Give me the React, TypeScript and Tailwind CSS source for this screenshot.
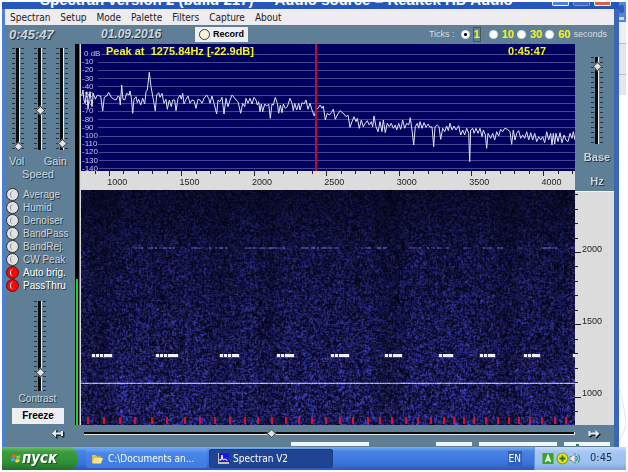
import React, { useEffect, useRef } from "react";

const SANS = "font-['Liberation_Sans',sans-serif]";
const TAHOMA = "font-['DejaVu_Sans_Condensed','DejaVu_Sans',sans-serif]";
const EMBOSS = "text-[#cdd5dc] [text-shadow:1px_1px_0_#26343f]";

/* ---------- spectrum trace ---------- */

const TRACE_PARTS = [
  {
    ox: -1,
    oy: -4,
    points:
      "5,168 9,150 12,180 15,190 20,155 24,205 30,155 36,200 40,160 46,178 52,165 58,168 62,168 68,213 73,172 80,168 86,157 94,172 100,176 108,180 114,168 118,170 121,195 125,135 129,178 134,180 140,160 147,165 150,153 154,172 158,220 162,178 168,170 172,188 176,178 182,195 188,175 194,192 198,155 202,150 208,97 213,140 220,178 226,213 230,165 236,158 240,172 246,160 252,190 258,178 262,208 268,180 274,200 278,180 284,180 288,212 294,175 300,165 304,178 308,160 312,192 318,178 324,168 330,190 336,180 342,182 348,205 354,178 360,180 366,190 372,175 380,165 386,175 390,190 396,168 402,190 410,222 414,180 420,185 426,172 432,222 438,175 444,200 450,180 456,165 462,172 468,180 474,185 482,220 488,190 494,200",
  },
  {
    ox: 159,
    oy: 36,
    points:
      "18,55 24,70 30,55 36,72 42,52 48,60 52,75 56,65 60,95 64,72 68,95 74,72 80,78 86,72 91,115 96,72 100,75 106,52 112,70 116,100 121,75 126,98 130,72 136,85 142,80 150,55 156,70 160,92 164,70 170,90 176,70 180,90 186,68 192,72 198,60 204,88 210,70 216,90 223,108 228,88 234,85 240,75 246,85 250,78 256,120 262,100 268,105 274,98 280,88 286,118 292,105 300,92 306,97 312,102 318,110 324,105 330,142 336,125 342,110 348,125 352,115 358,145 364,120 370,140 376,130 382,122 388,135 394,125 398,140 402,108 408,140 414,155 420,125 426,155 430,120 436,158 442,130 448,140 454,130 460,145 466,135 470,150 476,130",
  },
  {
    ox: 319,
    oy: 46,
    points:
      "2,118 8,90 14,115 20,100 26,105 31,83 36,120 41,165 46,110 52,100 56,115 60,95 66,115 72,98 78,112 84,102 90,112 96,110 101,170 105,110 112,105 117,110 122,148 128,115 134,125 140,108 145,122 150,100 156,120 162,108 168,120 176,107 182,135 188,120 194,135 200,115 206,130 209,215 212,120 218,115 222,130 228,115 234,130 240,115 246,140 250,120 256,135 260,175 264,130 272,145 278,130 284,150 290,125 296,138 302,118 308,125 314,115 322,118 330,125 335,163 340,120 345,150 350,130 356,122 362,145 368,135 374,145 380,125 386,150 392,128 398,150 404,130 410,155 416,140 422,150 428,140 434,158 440,125 446,150 452,130 456,165 460,130 464,162 468,130 474,155 480,128 486,158 492,135 498,150 504,155 510,130 516,145 520,125 525,150",
  },
];

const TRACE = TRACE_PARTS.flatMap(({ ox, oy, points }) =>
  points.split(" ").map((p) => {
    const [x, y] = p.split(",").map(Number);
    return `${(ox + x / 3).toFixed(1)},${(oy + y / 3).toFixed(1)}`;
  }),
).join(" ");

const DB_LABELS = ["0 dB", "-10", "-20", "-30", "-40", "-50", "-60", "-70", "-80", "-90", "-100", "-110", "-120", "-130", "-140"];

function Spectrum() {
  return (
    <div className="relative h-[127px] overflow-hidden bg-[#00005e]">
      <div className="absolute inset-x-0 top-[6px] flex h-[123px] flex-col justify-between">
        {DB_LABELS.map((label) => (
          <div key={label} className="flex h-2 items-center gap-px">
            <span className={`text-[8px] leading-[8px] text-[#c4c4ea] ${label === "0 dB" ? "pl-[3px]" : "min-w-4 pl-px"}`}>{label}</span>
            <span className="h-px flex-1 bg-[#46468e]" />
          </div>
        ))}
      </div>
      <svg className="absolute inset-0 h-full w-full" viewBox="0 0 494 127" preserveAspectRatio="none" aria-hidden="true">
        <polyline points={TRACE} fill="none" stroke="#e4e4fa" strokeWidth="1" />
        <rect x="234" y="0" width="2" height="127" fill="#b80c3c" shapeRendering="crispEdges" />
      </svg>
      <div className="absolute inset-x-0 top-0 flex justify-between pr-[29px] pl-[25px] text-[11px] leading-[14px] font-bold text-[#f6f620]">
        <span className="whitespace-pre">Peak at  1275.84Hz [-22.9dB]</span>
        <span>0:45:47</span>
      </div>
    </div>
  );
}

const HZ_LABELS = [1000, 1500, 2000, 2500, 3000, 3500, 4000];
const PX_PER_500 = 72.4;

function HzScale() {
  const ticks = Array.from({ length: 34 }, (_, i) => i - 1);
  return (
    <div className="relative h-[19px] overflow-hidden bg-[#dcdcdc]">
      <svg className="absolute inset-0 h-full w-full" viewBox="0 0 494 19" preserveAspectRatio="none" aria-hidden="true">
        {ticks.map((i) => (
          <rect key={i} x={Math.round(28 + (i * PX_PER_500) / 5)} y="0" width="1" height={i % 5 === 0 ? 5 : 3} fill="#222" />
        ))}
      </svg>
      <div className="flex pt-[5px]">
        {HZ_LABELS.map((hz) => (
          <span key={hz} className="shrink-0 text-center text-[9px] leading-[12px] text-[#222]" style={{ width: `${(PX_PER_500 / 494) * 100}%` }}>
            {hz}
          </span>
        ))}
      </div>
    </div>
  );
}

/* ---------- waterfall ---------- */

const WF_W = 494;
const WF_H = 235;
const BURSTS = [
  [11, 20],
  [75, 22],
  [139, 19],
  [196, 17],
  [250, 18],
  [304, 17],
  [358, 14],
  [399, 15],
  [443, 16],
  [492, 2],
];
const SECOND_MARKS = [
  6, 22, 38, 53, 70, 85, 103, 118, 133, 148, 163, 176, 190, 204, 217, 230, 244, 258, 271, 286, 298, 310, 324, 336, 349, 362, 372, 382,
  392, 404, 416, 427, 437, 448, 460, 473, 484,
];

function paintWaterfall(ctx: CanvasRenderingContext2D) {
  let seed = 20160901;
  const rnd = () => {
    seed = (seed * 1664525 + 1013904223) >>> 0;
    return seed / 4294967296;
  };
  const grain = new Float32Array(WF_W * WF_H);
  for (let i = 0; i < grain.length; i++) grain[i] = rnd();
  const column = Array.from({ length: WF_W }, () => 0.9 + rnd() * 0.2);
  const at = (x: number, y: number) => grain[Math.min(WF_H - 1, Math.max(0, y)) * WF_W + Math.min(WF_W - 1, Math.max(0, x))];
  const image = ctx.createImageData(WF_W, WF_H);
  for (let y = 0; y < WF_H; y++) {
    const depth = y / WF_H;
    const level = depth < 0.3 ? 0.28 + depth * 1.2 : 0.64 + (depth - 0.3) * 0.55;
    for (let x = 0; x < WF_W; x++) {
      const band = 1 - 0.3 * Math.max(0, Math.sin(x / 13) * Math.sin(x / 31 + 1));
      const n = at(x, y) * 0.4 + (at(x - 1, y) + at(x + 1, y) + at(x, y - 1) + at(x, y + 1)) * 0.15;
      const v = Math.max(0, (n - 0.12) * 1.35) ** 1.5 * level * band * column[x];
      const o = (y * WF_W + x) * 4;
      image.data[o] = 3 + v * 62;
      image.data[o + 1] = 3 + v * 66;
      image.data[o + 2] = 20 + v * 186;
      image.data[o + 3] = 255;
    }
  }
  ctx.putImageData(image, 0, 0);

  for (let x = 44; x < WF_W; x += 2) {
    const lit = Math.sin(x / 9) + Math.sin(x / 4.3) > -0.3 && rnd() > 0.25;
    if (lit) {
      ctx.fillStyle = `rgba(100,105,215,${0.15 + rnd() * 0.5})`;
      ctx.fillRect(x, 57, 2, 2);
    }
  }

  for (const [start, length] of BURSTS) {
    ctx.fillStyle = "rgba(90,90,200,0.5)";
    ctx.fillRect(start - 1, 164, length + 2, 4);
    ctx.fillStyle = "#f0f0ff";
    const tail = Math.min(length, 7);
    ctx.fillRect(start + length - tail, 164, tail, 3);
    for (let x = start; x < start + length - tail; x += 4) ctx.fillRect(x, 164, 3, 3);
  }

  for (let x = 0; x < WF_W; x++) {
    const a = 0.65 + rnd() * 0.35;
    ctx.fillStyle = `rgba(205,205,255,${a})`;
    ctx.fillRect(x, 193, 1, 1);
    ctx.fillStyle = `rgba(120,120,220,${a * 0.5})`;
    ctx.fillRect(x, 192, 1, 1);
  }

  ctx.fillStyle = "#e00c2a";
  for (const x of SECOND_MARKS) ctx.fillRect(x, 227, 2, 7);
}

function Waterfall() {
  const ref = useRef<HTMLCanvasElement>(null);
  useEffect(() => {
    const ctx = ref.current?.getContext("2d");
    if (ctx) paintWaterfall(ctx);
  }, []);
  return <canvas ref={ref} width={WF_W} height={WF_H} className="block h-[235px] w-full" aria-label="Waterfall" />;
}

/* ---------- controls ---------- */

const THUMB =
  "[&::-webkit-slider-thumb]:size-[7px] [&::-webkit-slider-thumb]:rotate-45 [&::-webkit-slider-thumb]:appearance-none [&::-webkit-slider-thumb]:border [&::-webkit-slider-thumb]:border-[#3c4650] [&::-webkit-slider-thumb]:bg-[#e2e2e2]";

function Fader({ name, value, height }: { name: string; value: number; height: number }) {
  const marks = Math.floor(height / 5) + 1;
  return (
    <div className="relative w-[14px]" style={{ height }}>
      <svg className="absolute inset-0 h-full w-full" viewBox={`0 0 14 ${height}`} shapeRendering="crispEdges" aria-hidden="true">
        {Array.from({ length: marks }, (_, i) => (
          <path key={i} d={`M1 ${Math.min(i * 5 + 0.5, height - 0.5)}h3M10 ${Math.min(i * 5 + 0.5, height - 0.5)}h3`} stroke="#25323c" />
        ))}
        <rect x="5" y="0" width="3" height={height} fill="#0a0a0a" />
        <rect x="8" y="0" width="1" height={height} fill="#e8ecee" />
      </svg>
      <input
        type="range"
        aria-label={name}
        defaultValue={value}
        className={`absolute inset-0 m-0 h-full w-[14px] appearance-none bg-transparent [direction:rtl] [writing-mode:vertical-lr] ${THUMB}`}
      />
    </div>
  );
}

const FILTERS = [
  { name: "Average", on: false },
  { name: "Humid", on: false },
  { name: "Denoiser", on: false },
  { name: "BandPass", on: false },
  { name: "BandRej.", on: false },
  { name: "CW Peak", on: false },
  { name: "Auto brig.", on: true },
  { name: "PassThru", on: true },
];

function FilterToggle({ name, on }: { name: string; on: boolean }) {
  return (
    <label className="flex h-[13px] items-center gap-1">
      <input
        type="checkbox"
        defaultChecked={on}
        className="relative size-[13px] appearance-none rounded-full border border-[#27323a] bg-[#e2e2e2] before:absolute before:top-[2px] before:left-[3px] before:h-[7px] before:w-[4px] before:rounded-l-full before:border-l before:border-[#8a8a8a] checked:border-[#5c1018] checked:bg-[#f20a0a] checked:before:border-white"
      />
      <span className={`text-[10px] leading-[13px] ${on ? "text-white [text-shadow:1px_1px_0_#26343f]" : EMBOSS}`}>{name}</span>
    </label>
  );
}

function LeftPanel() {
  return (
    <div className="flex w-[70px] shrink-0 flex-col">
      <div className="flex gap-2 pt-[4px] pl-[6px]">
        <Fader name="Vol" value={0} height={102} />
        <Fader name="Speed" value={38} height={102} />
        <Fader name="Gain" value={3} height={102} />
      </div>
      <div className={`grid grid-cols-2 pt-[5px] text-[11px] leading-[13px] ${EMBOSS}`}>
        <span className="pl-1">Vol</span>
        <span className="pr-2 text-right">Gain</span>
        <span className="col-span-2 pr-1 text-center">Speed</span>
      </div>
      <div className="flex flex-col pt-[7px] pb-px pl-px">
        {FILTERS.map((f) => (
          <FilterToggle key={f.name} {...f} />
        ))}
      </div>
      <div className="flex justify-center pt-[8px]">
        <Fader name="Contrast" value={18} height={90} />
      </div>
      <span className={`pt-px pr-[5px] text-center text-[10px] leading-[14px] ${EMBOSS}`}>Contrast</span>
      <button type="button" className="mt-[2px] ml-[7px] h-[16px] w-[52px] bg-[#efeff3] text-[10px] leading-[16px] font-bold text-black">
        Freeze
      </button>
    </div>
  );
}

function LevelMeter() {
  return (
    <div className="flex w-[6px] shrink-0 justify-between">
      <div className="flex w-1 flex-col justify-end bg-black px-px">
        <div className="h-[146px] bg-[#1fd21f]" />
      </div>
      <div className="w-px bg-[#d4dae0]" />
    </div>
  );
}

const SIDE_LABELS = [2000, 1500, 1000];

function RightPanel() {
  return (
    <div className="flex w-[39px] shrink-0 flex-col">
      <div className={`flex h-[147px] flex-col items-center pt-[13px] pl-[5px] text-[11px] font-bold ${EMBOSS}`}>
        <Fader name="Base" value={93} height={87} />
        <span className="pt-[5px] leading-[16px]">Base</span>
        <span className="pt-[8px] leading-[16px]">Hz</span>
      </div>
      <div className="relative flex-1 overflow-hidden border-t border-[#f4f4f4] bg-[#dcdcdc]">
        <svg className="absolute top-0 left-0 h-[234px] w-2" viewBox="0 0 8 234" aria-hidden="true">
          {Array.from({ length: 16 }, (_, i) => (
            <rect key={i} x="0" y={Math.round(60 + ((i - 4) * PX_PER_500) / 5)} width={(i - 4) % 5 === 0 ? 6 : 3} height="1" fill="#222" />
          ))}
        </svg>
        <div className="absolute inset-x-0 top-0 flex flex-col pt-[16px] pl-[7px]">
          {SIDE_LABELS.map((hz) => (
            <span key={hz} className="flex h-[72px] items-center pt-[12px] text-[9px] text-[#222]">
              {hz}
            </span>
          ))}
        </div>
      </div>
    </div>
  );
}

function Arrow({ flip }: { flip?: boolean }) {
  const d = flip
    ? "M12.500 5.500 8.500 1.500V4.500H3.500V3h-2v5h2V6.500H8.500V9.500z"
    : "M1 5.500 5 1.500V4.500H10V3h2v5h-2V6.500H5V9.500z";
  return (
    <svg width="15" height="12" viewBox="0 0 15 12" aria-hidden="true">
      <path d={d} fill="#1c262e" stroke="#1c262e" transform="translate(1 1)" />
      <path d={d} fill="#e6eaec" />
    </svg>
  );
}

function ScrollRow() {
  return (
    <div className="flex h-[22px] flex-col bg-[#5f7f96]">
      <div className="flex h-[17px] items-center">
        <button type="button" aria-label="Scroll left" className="ml-[46px] shrink-0">
          <Arrow />
        </button>
        <div className="relative ml-[18px] h-[17px] flex-1">
          <div className="absolute inset-x-0 top-[7px] h-[3px] border-r border-b border-[#e4e8ec] bg-[#0a0a0a]" />
          <input
            type="range"
            aria-label="Frequency offset"
            defaultValue={38}
            className={`absolute inset-0 m-0 h-[17px] w-full appearance-none bg-transparent ${THUMB}`}
          />
        </div>
        <button type="button" aria-label="Scroll right" className="mr-[12px] ml-[12px] shrink-0">
          <Arrow flip />
        </button>
      </div>
      <div className="flex h-[5px] justify-end gap-[7px] pr-1">
        <div className="mr-[60px] h-1 w-[78px] bg-[#f3f5f8]" />
        <div className="h-1 w-[36px] bg-[#f3f5f8]" />
        <div className="h-1 w-[78px] bg-[#f3f5f8]" />
        <div className="flex h-1 w-[46px] items-end bg-[#f3f5f8] pl-3">
          <span className="h-[2px] w-[3px] bg-[#1a8a50]" />
        </div>
      </div>
    </div>
  );
}

const MENU = ["Spectran", "Setup", "Mode", "Palette", "Filters", "Capture", "About"];
const TICKS = ["1", "10", "30", "60"];

function ToolRow() {
  return (
    <div className="flex h-[19px] items-center bg-[#5f7f96]">
      <span className={`w-[92px] pl-1 text-[13px] leading-[15px] font-bold italic ${EMBOSS}`}>0:45:47</span>
      <span className={`w-[98px] pl-1 text-[12px] leading-[15px] font-bold italic ${EMBOSS}`}>01.09.2016</span>
      <button type="button" className="flex h-[15px] w-[53px] items-center gap-[3px] bg-[#efeff3] pl-1 text-[9px] font-bold text-black">
        <span className="size-[11px] rounded-full border border-[#3c3a28] bg-[#f8f4de]" />
        Record
      </button>
      <fieldset className="ml-auto flex items-center">
        <legend className="sr-only">Tick spacing</legend>
        <span className="mr-[6px] text-[9px] text-[#d4dce2]">Ticks :</span>
        {TICKS.map((t) => (
          <label key={t} className={`flex items-center gap-1 ${t === "1" ? "mr-[9px]" : "mr-[3px]"}`}>
            <input
              type="radio"
              name="ticks"
              defaultChecked={t === "1"}
              className="size-[9px] appearance-none rounded-full border border-[#dfe4e8] bg-white checked:bg-[radial-gradient(#000_0_1px,#fff_2px)]"
            />
            <span className={`text-[11px] leading-[13px] font-bold text-[#f4f41c] ${t === "1" ? "outline outline-[#46535c]" : ""}`}>{t}</span>
          </label>
        ))}
        <span className="mr-[7px] text-[9px] text-[#d4dce2]">seconds</span>
      </fieldset>
    </div>
  );
}

function SpectranWindow() {
  return (
    <div className={`min-w-0 flex-1 ${SANS}`}>
      <header className="flex h-[7px] items-end justify-between overflow-hidden bg-[#2456bc] pr-2 pl-[38px]">
        <h1 className="pb-[2px] text-[15px] leading-[14px] font-bold whitespace-pre text-white">
          {"Spectran version 2 (build 217)  -  Audio source = Realtek HD Audio"}
        </h1>
        <div className="flex gap-1">
          <button type="button" aria-label="Minimize" className="mb-[3px] h-[4px] w-[17px] rounded-b-xs border border-t-0 border-white bg-[#4a7fe0]" />
          <button type="button" aria-label="Maximize" className="mb-[3px] h-[4px] w-[17px] rounded-b-xs border border-t-0 border-[#7f9bd0] bg-[#4468b8]" />
          <button type="button" aria-label="Close" className="mb-[3px] h-[4px] w-[17px] rounded-b-xs border border-t-0 border-white bg-[#e0603c]" />
        </div>
      </header>
      <div className="border-r-[5px] border-l-[3px] border-r-[#3a66b8] border-l-[#4a80d8]">
        <nav className={`flex h-4 items-center gap-[10px] bg-[#eeecf1] pl-[5px] text-[10px] text-[#222] ${TAHOMA}`}>
          {MENU.map((m) => (
            <button key={m} type="button">
              {m}
            </button>
          ))}
        </nav>
        <ToolRow />
        <div className="flex bg-[#5f7f96]">
          <LeftPanel />
          <LevelMeter />
          <main className="min-w-0 flex-1">
            <Spectrum />
            <HzScale />
            <Waterfall />
          </main>
          <RightPanel />
        </div>
        <ScrollRow />
      </div>
    </div>
  );
}

function DesktopEdge() {
  return (
    <div className="flex w-[7px] shrink-0 flex-col">
      <div className="h-5 bg-[#4f86d8] py-[3px]">
        <div className="h-2 w-[5px] rounded-xs bg-[#2c5cb4]" />
        <div className="mt-1 h-[3px] w-[5px] bg-[#cfe0f8]" />
      </div>
      <div className="h-[22px] border-b border-[#bcb8c4] bg-[#f0eef4]" />
      <div className="h-[31px] border-b border-[#bcb8c4] bg-[#e6e4ec]" />
      <div className="h-5 bg-[#e6e4ec]" />
      <div className="h-[270px]" />
      <svg viewBox="0 0 7 82" className="h-[82px] w-[7px]" aria-hidden="true">
        <path d="M0 24Q5 36 7 60M0 76Q4 70 7 60" fill="none" stroke="#dfe8dc" />
      </svg>
    </div>
  );
}

function Taskbar() {
  return (
    <footer className="flex h-[23px] items-stretch bg-[linear-gradient(#7db0f0_0,#4784e4_4px,#3a74dc_70%,#2c58b8)]">
      <button
        type="button"
        className={`flex w-[75px] items-center rounded-r-lg bg-[linear-gradient(#6cc06c_0,#3a9c3e_5px,#2f8f34_70%,#1f6f26)] pl-[9px] text-[15px] leading-none font-bold text-white italic [text-shadow:1px_1px_1px_#1c4a20] ${TAHOMA}`}
      >
        <svg width="10" height="11" viewBox="0 0 10 11" className="mr-px" aria-hidden="true">
          <path d="M1 2Q3 .5 5 2L4.300 5Q2.500 4 .5 5z" fill="#f0642c" />
          <path d="M5.600 2.300Q7.500 3.500 9.600 2L9 5Q7 6.300 5 5.300z" fill="#8cd048" />
          <path d="M.4 5.600Q2.300 4.600 4.200 5.600L3.500 8.600Q1.700 7.600 0 8.600z" fill="#5c9cf0" />
          <path d="M4.800 6Q6.800 7 8.800 5.700L8.200 8.800Q6.200 10 4.200 9z" fill="#fcd444" />
        </svg>
        пуск
      </button>
      <button
        type="button"
        className={`my-[2px] ml-[9px] flex w-[121px] items-center gap-[5px] rounded-xs bg-[linear-gradient(#6aa4f4,#4886ea_4px,#3f7ae0)] pl-[6px] text-[10px] leading-none text-white ${TAHOMA}`}
      >
        <svg width="11" height="10" viewBox="0 0 11 10" className="shrink-0" aria-hidden="true">
          <path d="M0 1h4l1 1.500h4V9H0z" fill="#e8b83c" />
          <path d="M2 4h9L9 9.500H.5z" fill="#fce88c" />
        </svg>
        C:\Documents an...
      </button>
      <button
        type="button"
        className={`my-[2px] ml-[2px] flex w-[124px] items-center gap-[4px] rounded-xs border border-[#1c3c80] bg-[#1f4592] pl-2 text-[10px] leading-none text-white ${TAHOMA}`}
      >
        <svg width="11" height="11" viewBox="0 0 11 11" className="shrink-0" aria-hidden="true">
          <rect width="11" height="11" fill="#c8c4b0" />
          <rect x="1" width="10" height="9" fill="#1818e0" />
          <path d="M2 8V6l1 1 1-5 1 5 2-1 2 1v1" fill="none" stroke="#fff" />
        </svg>
        Spectran V2
      </button>
      <span className={`my-1 mr-3 ml-auto flex items-center bg-[#2f5fb8] px-px text-[10px] text-white ${TAHOMA}`}>EN</span>
      <div className={`flex w-[92px] items-center border-l border-[#5c94e0] bg-[linear-gradient(#c4dcfa_0,#a4c6f4_5px,#9cc0f0_70%,#7ca4e0)] pl-[7px] text-[11px] text-[#1c2c48] ${TAHOMA}`}>
        <svg width="39" height="13" viewBox="0 0 39 13" aria-hidden="true">
          <rect x=".5" y="1" width="11" height="11" fill="#38a428" />
          <path d="M3.500 10 6 3.500 8.500 10M4.500 8h3" fill="none" stroke="#fff" strokeWidth="1.500" />
          <circle cx="20.500" cy="6.500" r="5.500" fill="#f4dc28" stroke="#5cae28" strokeWidth="1.200" />
          <path d="M20.500 3.500v6M17.500 6.500h6" stroke="#287c20" strokeWidth="2" />
          <path d="M28 4.500h2l3-3v10l-3-3h-2z" fill="#f4f6fa" stroke="#5c6c84" strokeWidth=".8" />
          <path d="M34.500 4q1.500 2.500 0 5M36.500 2.500q2.500 4 0 8" fill="none" stroke="#2c8c5c" />
        </svg>
        <span className="ml-[9px]">0:45</span>
      </div>
    </footer>
  );
}

export default function App() {
  return (
    <div className="flex flex-col bg-white p-[2px]">
      <div className="flex">
        <SpectranWindow />
        <DesktopEdge />
      </div>
      <Taskbar />
    </div>
  );
}
